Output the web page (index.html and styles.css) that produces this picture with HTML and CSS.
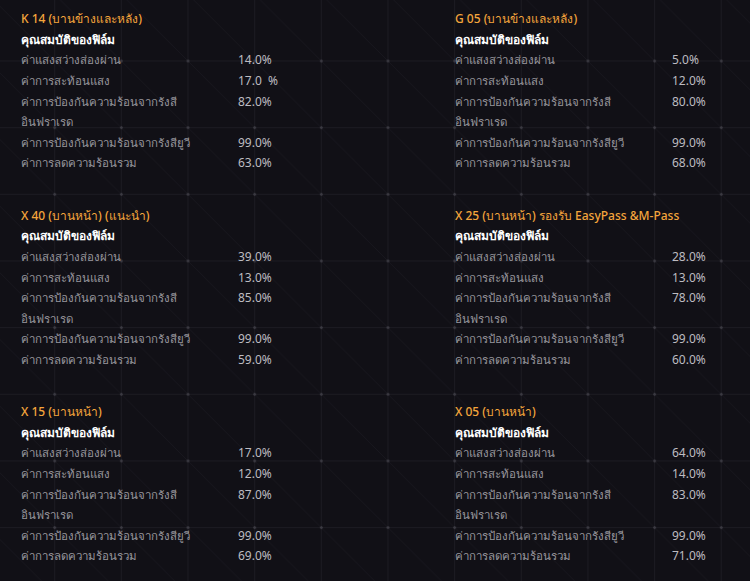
FILE: index.html
```html
<!DOCTYPE html>
<html lang="th">
<head>
    <meta charset="UTF-8">
    <meta name="viewport" content="width=device-width, initial-scale=1.0">
    <title>ฟิล์มกรองแสง</title>

    <link rel="stylesheet" href="styles.css">
</head>

<body>
    <div class="wrapper">

        <div class="film">
            <h3 class="film-name">K 14 (บานข้างและหลัง)</h3>
            <h4 class="film-head">คุณสมบัติของฟิล์ม</h4>
            <div class="props">
                <span class="label">ค่าแสงสว่างส่องผ่าน</span><span class="value">14.0%</span>
                <span class="label">ค่าการสะท้อนแสง</span><span class="value">17.0&nbsp; %</span>
                <span class="label">ค่าการป้องกันความร้อนจากรังสี<br>อินฟราเรด</span><span class="value">82.0%</span>
                <span class="label">ค่าการป้องกันความร้อนจากรังสียูวี</span><span class="value">99.0%</span>
                <span class="label">ค่าการลดความร้อนรวม</span><span class="value">63.0%</span>
            </div>
        </div>

        <div class="film">
            <h3 class="film-name">G 05 (บานข้างและหลัง)</h3>
            <h4 class="film-head">คุณสมบัติของฟิล์ม</h4>
            <div class="props">
                <span class="label">ค่าแสงสว่างส่องผ่าน</span><span class="value">5.0%</span>
                <span class="label">ค่าการสะท้อนแสง</span><span class="value">12.0%</span>
                <span class="label">ค่าการป้องกันความร้อนจากรังสี<br>อินฟราเรด</span><span class="value">80.0%</span>
                <span class="label">ค่าการป้องกันความร้อนจากรังสียูวี</span><span class="value">99.0%</span>
                <span class="label">ค่าการลดความร้อนรวม</span><span class="value">68.0%</span>
            </div>
        </div>

        <div class="film">
            <h3 class="film-name">X 40 (บานหน้า) (แนะนำ)</h3>
            <h4 class="film-head">คุณสมบัติของฟิล์ม</h4>
            <div class="props">
                <span class="label">ค่าแสงสว่างส่องผ่าน</span><span class="value">39.0%</span>
                <span class="label">ค่าการสะท้อนแสง</span><span class="value">13.0%</span>
                <span class="label">ค่าการป้องกันความร้อนจากรังสี<br>อินฟราเรด</span><span class="value">85.0%</span>
                <span class="label">ค่าการป้องกันความร้อนจากรังสียูวี</span><span class="value">99.0%</span>
                <span class="label">ค่าการลดความร้อนรวม</span><span class="value">59.0%</span>
            </div>
        </div>

        <div class="film">
            <h3 class="film-name">X 25 (บานหน้า) รองรับ EasyPass &amp;M-Pass</h3>
            <h4 class="film-head">คุณสมบัติของฟิล์ม</h4>
            <div class="props">
                <span class="label">ค่าแสงสว่างส่องผ่าน</span><span class="value">28.0%</span>
                <span class="label">ค่าการสะท้อนแสง</span><span class="value">13.0%</span>
                <span class="label">ค่าการป้องกันความร้อนจากรังสี<br>อินฟราเรด</span><span class="value">78.0%</span>
                <span class="label">ค่าการป้องกันความร้อนจากรังสียูวี</span><span class="value">99.0%</span>
                <span class="label">ค่าการลดความร้อนรวม</span><span class="value">60.0%</span>
            </div>
        </div>

        <div class="film">
            <h3 class="film-name">X 15 (บานหน้า)</h3>
            <h4 class="film-head">คุณสมบัติของฟิล์ม</h4>
            <div class="props">
                <span class="label">ค่าแสงสว่างส่องผ่าน</span><span class="value">17.0%</span>
                <span class="label">ค่าการสะท้อนแสง</span><span class="value">12.0%</span>
                <span class="label">ค่าการป้องกันความร้อนจากรังสี<br>อินฟราเรด</span><span class="value">87.0%</span>
                <span class="label">ค่าการป้องกันความร้อนจากรังสียูวี</span><span class="value">99.0%</span>
                <span class="label">ค่าการลดความร้อนรวม</span><span class="value">69.0%</span>
            </div>
        </div>

        <div class="film">
            <h3 class="film-name">X 05 (บานหน้า)</h3>
            <h4 class="film-head">คุณสมบัติของฟิล์ม</h4>
            <div class="props">
                <span class="label">ค่าแสงสว่างส่องผ่าน</span><span class="value">64.0%</span>
                <span class="label">ค่าการสะท้อนแสง</span><span class="value">14.0%</span>
                <span class="label">ค่าการป้องกันความร้อนจากรังสี<br>อินฟราเรด</span><span class="value">83.0%</span>
                <span class="label">ค่าการป้องกันความร้อนจากรังสียูวี</span><span class="value">99.0%</span>
                <span class="label">ค่าการลดความร้อนรวม</span><span class="value">71.0%</span>
            </div>
        </div>

    </div>
</body>

</html>
```

FILE: styles.css
```css
* {
    padding: 0;
    margin: 0;
    box-sizing: border-box;
}

body {
    font-family: "Noto Sans", sans-serif;
    font-size: 12px;
    line-height: 20.6px;
    background-color: #111016;
    background-image:
        radial-gradient(circle, #3b3a42 0, #3b3a42 1px, transparent 1.6px),
        linear-gradient(90deg, #1c1b22 1px, transparent 1px),
        linear-gradient(180deg, #1c1b22 1px, transparent 1px),
        linear-gradient(to top right, transparent calc(50% - 0.6px), #18171e 50%, transparent calc(50% + 0.6px));
    background-size: 66.67px 66.67px;
    background-position: 21.4px 27.7px, 54.2px 0, 0 60.5px, 54.7px 61px;
}

.wrapper {
    display: grid;
    grid-template-columns: 434px 1fr;
    row-gap: 31.8px;
    padding: 9.2px 0 0 21px;
}

.film-name {
    font-size: 12px;
    font-weight: 500;
    color: #f4a53c;
}

.film-head {
    font-size: 12px;
    font-weight: 700;
    color: #ffffff;
}

.props {
    display: grid;
    grid-template-columns: 217px auto;
}

.label {
    font-size: 11.5px;
    color: #97969c;
}

.value {
    color: #bdbcc1;
}
```
